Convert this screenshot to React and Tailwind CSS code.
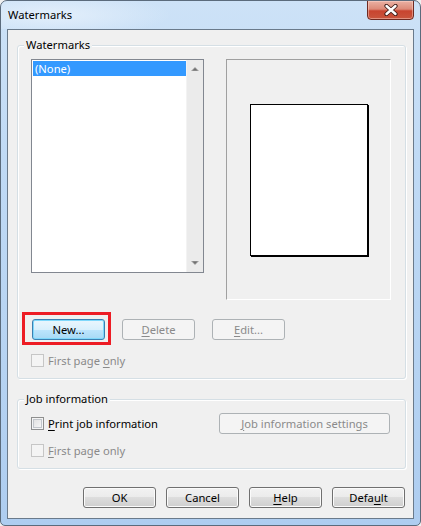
import React from "react";

const U = ({ children }) => (
  <span className="underline decoration-1 underline-offset-[2px]">{children}</span>
);

function Btn({ children, disabled, focused, className = "" }) {
  let look =
    "border-[#707070] bg-[linear-gradient(#f2f2f2_0%,#ebebeb_50%,#dddddd_50%,#cfcfcf_100%)] text-black shadow-[inset_0_0_0_1px_#fbfbfb]";
  if (disabled) look = "border-[#adb2b5] bg-[#f4f4f4] text-[#8a8a8a]";
  if (focused)
    look =
      "border-[#3c7fb1] bg-[linear-gradient(#eaf6fd_0%,#d9f0fc_50%,#bee6fd_50%,#a7d9f5_100%)] text-black shadow-[inset_0_0_0_1px_#7fd8fb]";
  return (
    <div
      className={`h-[21px] w-[73px] flex items-center justify-center rounded-[3px] border ${look} ${className}`}
    >
      <span className="leading-[16px]">{children}</span>
    </div>
  );
}

function Check({ disabled, children }) {
  return (
    <div className="flex items-center h-[13px]">
      <div
        className={
          disabled
            ? "w-[13px] h-[13px] border border-[#c6c6c6] bg-[#f4f4f4] shrink-0"
            : "w-[13px] h-[13px] border border-[#8e8f8f] bg-[linear-gradient(135deg,#dcdcdc,#fbfbfb)] shadow-[inset_0_0_0_1px_#f4f4f4,inset_0_0_0_2px_#c2c6cb] shrink-0"
        }
      />
      <span
        className={`ml-[4px] leading-[16px] whitespace-nowrap ${disabled ? "text-[#8a8a8a]" : "text-black"}`}
      >
        {children}
      </span>
    </div>
  );
}

function Group({ label, className = "", children }) {
  return (
    <div
      className={`relative border border-[#d5dfe5] rounded-[3px] shadow-[inset_1px_1px_0_#ffffff,1px_1px_0_#ffffff] ${className}`}
    >
      <span className="absolute left-[6px] -top-[9px] px-[2px] bg-[#f0f0f0] leading-[16px] text-black">
        {label}
      </span>
      {children}
    </div>
  );
}

export default function App() {
  return (
    <div className="w-[421px] h-[526px] bg-[#f0f0f0]">
      <div
        className="w-[421px] h-[526px] flex flex-col border border-[#5b6b7c] rounded-t-[7px] rounded-b-[5px] bg-[linear-gradient(180deg,#cde2f7_0%,#c0daf5_30%,#b6d3f2_70%,#aecdf0_100%)] text-[11.2px] font-['Noto_Sans',sans-serif] text-black overflow-hidden"
      >
        {/* Title bar */}
        <div className="h-[28px] flex items-start justify-between shrink-0 bg-[radial-gradient(ellipse_120px_22px_at_50px_14px,#e3effb_0%,rgba(227,239,251,0)_100%)]">
          <div className="pl-[7px] pt-[6px] leading-[16px] text-black">Watermarks</div>
          <div className="mr-[6px] -mt-[1px] w-[47px] h-[20px] rounded-b-[4px] border border-[#6e2a22] bg-[linear-gradient(180deg,#eab1a3_0%,#dc8a78_45%,#c8442f_55%,#c9553d_100%)] shadow-[inset_0_0_0_1px_rgba(255,220,210,0.45)] flex items-center justify-center">
            <svg width="14" height="12" viewBox="0 0 14 12">
              <path d="M2.5 2 L11.5 10 M11.5 2 L2.5 10" stroke="#3b1a16" strokeWidth="4.2" strokeLinecap="round" />
              <path d="M2.5 2 L11.5 10 M11.5 2 L2.5 10" stroke="#ffffff" strokeWidth="2.4" strokeLinecap="round" />
            </svg>
          </div>
        </div>

        {/* Client area */}
        <div className="mx-[6px] mb-[6px] h-[490px] border border-[#6a7a8b] bg-[#f0f0f0] flex flex-col">
          {/* Watermarks group */}
          <Group label="Watermarks" className="mt-[15px] ml-[9px] mr-[7px] pl-[13px] pt-[13px] pb-[11px]">
            <div className="flex">
              {/* Listbox */}
              <div className="w-[173px] h-[214px] border border-[#828790] bg-white flex">
                <div className="flex-1 pl-[1px] pt-[1px]">
                  <div className="h-[15px] bg-[#3399ff] text-white leading-[15px] pl-[2px]">(None)</div>
                </div>
                <div className="w-[17px] bg-[#ebebeb] border-l border-[#f3f3f3] flex flex-col justify-between items-center py-[6px]">
                  <svg width="8" height="5" viewBox="0 0 8 5">
                    <path d="M0 5 L4 1 L8 5 Z" fill="#a0a0a0" />
                    <path d="M1.5 4.5 L4 2 L6.5 4.5 Z" fill="#707070" />
                  </svg>
                  <svg width="8" height="5" viewBox="0 0 8 5">
                    <path d="M0 0 L4 4 L8 0 Z" fill="#a0a0a0" />
                    <path d="M1.5 0.5 L4 3 L6.5 0.5 Z" fill="#707070" />
                  </svg>
                </div>
              </div>
              {/* Preview */}
              <div className="ml-[22px] w-[165px] h-[241px] border border-t-[#a0a0a0] border-l-[#a0a0a0] border-b-white border-r-white flex items-center justify-center">
                <div className="w-[118px] h-[152px] bg-white border border-black shadow-[1px_1px_0_#000]" />
              </div>
            </div>
            {/* Buttons */}
            <div className="mt-[19px] ml-[1px] flex gap-[17px]">
              <div className="relative">
                <Btn focused>New...</Btn>
                <div className="absolute -left-[10px] -top-[7px] w-[89px] h-[33px] border-[3px] border-[#ed1c24]" />
              </div>
              <Btn disabled>
                <U>D</U>elete
              </Btn>
              <Btn disabled>
                <U>E</U>dit...
              </Btn>
            </div>
            <div className="mt-[14px]">
              <Check disabled>
                First page <U>o</U>nly
              </Check>
            </div>
          </Group>

          {/* Job information group */}
          <Group label="Job information" className="mt-[20px] ml-[9px] mr-[7px] pl-[13px] pr-[15px] pt-[13px] pb-[11px]">
            <div className="flex items-center justify-between h-[21px]">
              <Check>
                <U>P</U>rint job information
              </Check>
              <Btn disabled className="w-[171px]">
                <U>J</U>ob information settings
              </Btn>
            </div>
            <div className="mt-[10px]">
              <Check disabled>
                <U>F</U>irst page only
              </Check>
            </div>
          </Group>

          {/* Bottom buttons */}
          <div className="mt-[18px] mr-[8px] flex justify-end gap-[10px]">
            <Btn>OK</Btn>
            <Btn>Cancel</Btn>
            <Btn>
              <U>H</U>elp
            </Btn>
            <Btn>
              Defa<U>u</U>lt
            </Btn>
          </div>
        </div>
      </div>
    </div>
  );
}
